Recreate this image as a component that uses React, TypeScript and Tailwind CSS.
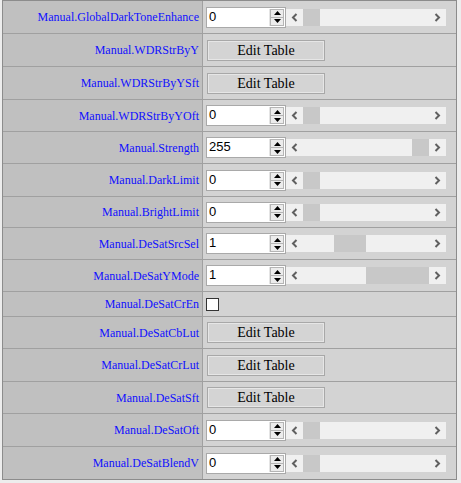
import React from "react";

type Row =
  | { kind: "num"; label: string; value: string; left: number; width: number; h: string }
  | { kind: "table"; label: string; h: string }
  | { kind: "check"; label: string; h: string };

// 行データ（スクロールバーのつまみ位置は画面から採寸）
const rows: Row[] = [
  { kind: "num", label: "Manual.GlobalDarkToneEnhance", value: "0", left: 17, width: 17, h: "h-[33px]" },
  { kind: "table", label: "Manual.WDRStrByY", h: "h-[33px]" },
  { kind: "table", label: "Manual.WDRStrByYSft", h: "h-[33px]" },
  { kind: "num", label: "Manual.WDRStrByYOft", value: "0", left: 17, width: 17, h: "h-[32px]" },
  { kind: "num", label: "Manual.Strength", value: "255", left: 126, width: 17, h: "h-[32px]" },
  { kind: "num", label: "Manual.DarkLimit", value: "0", left: 17, width: 17, h: "h-[33px]" },
  { kind: "num", label: "Manual.BrightLimit", value: "0", left: 17, width: 17, h: "h-[31px]" },
  { kind: "num", label: "Manual.DeSatSrcSel", value: "1", left: 48, width: 32, h: "h-[32px]" },
  { kind: "num", label: "Manual.DeSatYMode", value: "1", left: 80, width: 63, h: "h-[32px]" },
  { kind: "check", label: "Manual.DeSatCrEn", h: "h-[25px]" },
  { kind: "table", label: "Manual.DeSatCbLut", h: "h-[32px]" },
  { kind: "table", label: "Manual.DeSatCrLut", h: "h-[33px]" },
  { kind: "table", label: "Manual.DeSatSft", h: "h-[32px]" },
  { kind: "num", label: "Manual.DeSatOft", value: "0", left: 17, width: 17, h: "h-[33px]" },
  { kind: "num", label: "Manual.DeSatBlendV", value: "0", left: 17, width: 17, h: "h-[32px]" },
];

function Spin() {
  return (
    <div className="flex h-full w-[15px] flex-col border-l border-[#e4e4e4]">
      <div className="flex flex-1 items-center justify-center border border-[#b5b5b5] bg-[#ececec]">
        <svg width="7" height="4" viewBox="0 0 7 4">
          <path d="M3.5 0 L7 4 L0 4 Z" fill="#000" />
        </svg>
      </div>
      <div className="flex flex-1 items-center justify-center border border-t-0 border-[#b5b5b5] bg-[#ececec]">
        <svg width="7" height="4" viewBox="0 0 7 4">
          <path d="M0 0 L7 0 L3.5 4 Z" fill="#000" />
        </svg>
      </div>
    </div>
  );
}

function Scroll({ left, width }: { left: number; width: number }) {
  return (
    <div className="relative h-[17px] w-[160px] bg-[#f0f0f0]">
      <svg className="absolute left-[5px] top-[4px]" width="7" height="9" viewBox="0 0 7 9">
        <path d="M5.5 1 L2 4.5 L5.5 8" stroke="#606060" strokeWidth="2" fill="none" />
      </svg>
      {/* つまみ */}
      <div className="absolute top-0 h-[17px] bg-[#c8c8c8]" style={{ left, width }} />
      <svg className="absolute right-[5px] top-[4px]" width="7" height="9" viewBox="0 0 7 9">
        <path d="M1.5 1 L5 4.5 L1.5 8" stroke="#606060" strokeWidth="2" fill="none" />
      </svg>
    </div>
  );
}

function NumField({ value, left, width }: { value: string; left: number; width: number }) {
  return (
    <div className="flex items-center">
      <div className="flex h-[21px] w-[80px] items-stretch border border-[#a9a9a9] bg-white p-[1px]">
        <span className="flex-1 pl-[1px] [font-family:Liberation_Sans,Arial,sans-serif] text-[13px] leading-[15px] text-black">
          {value}
        </span>
        <Spin />
      </div>
      <Scroll left={left} width={width} />
    </div>
  );
}

function EditTable() {
  return (
    <button className="ml-[1px] flex h-[21px] w-[118px] items-center justify-center border border-[#a8a8a8] bg-[#d4d4d4] p-0 [font-family:Liberation_Serif,serif] text-[14px] text-black shadow-[inset_0_0_0_1px_#e6e6e6]">
      Edit Table
    </button>
  );
}

export default function App() {
  return (
    <div className="h-[483px] w-[461px] bg-[#ededed]">
      <div className="ml-[2px] w-[455px] border border-[#8c8c8c]">
        {rows.map((r, i) => (
          <div
            key={r.label}
            className={`flex ${r.h} ${i < rows.length - 1 ? "border-b border-[#a0a0a0]" : ""}`}
          >
            {/* ラベル列 */}
            <div className="flex w-[200px] items-center justify-end border-r border-[#a0a0a0] bg-[#c0c0c0] pr-[3px] [font-family:Liberation_Serif,serif] text-[12px] text-[#1010ff]">
              {r.label}
            </div>
            {/* 値列 */}
            <div className="flex flex-1 items-center bg-[#d3d3d3] pl-[3px]">
              {r.kind === "num" && <NumField value={r.value} left={r.left} width={r.width} />}
              {r.kind === "table" && <EditTable />}
              {r.kind === "check" && (
                <div className="h-[13px] w-[13px] border border-[#333] bg-white" />
              )}
            </div>
          </div>
        ))}
      </div>
    </div>
  );
}
